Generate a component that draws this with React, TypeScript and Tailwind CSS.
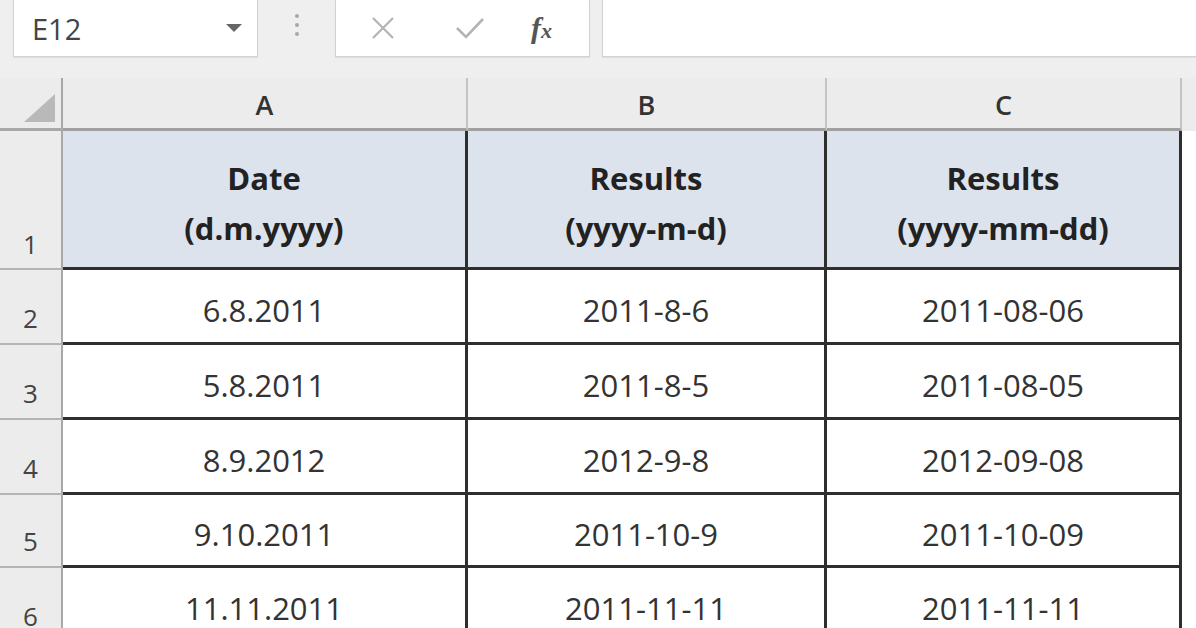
import React from 'react';

const cols = ['A', 'B', 'C'];

const heads = [
  ['Date', '(d.m.yyyy)'],
  ['Results', '(yyyy-m-d)'],
  ['Results', '(yyyy-mm-dd)'],
];

const rows = [
  ['6.8.2011', '2011-8-6', '2011-08-06'],
  ['5.8.2011', '2011-8-5', '2011-08-05'],
  ['8.9.2012', '2012-9-8', '2012-09-08'],
  ['9.10.2011', '2011-10-9', '2011-10-09'],
  ['11.11.2011', '2011-11-11', '2011-11-11'],
];

const widths = ['w-[405px]', 'w-[359px]', 'w-[355px]'];
const rowHeights = ['h-[75px]', 'h-[75px]', 'h-[75px]', 'h-[73px]', 'h-[75px]'];

function FormulaBar() {
  return (
    <div className="flex h-[78px] bg-[#efefef]">
      {/* name box */}
      <div className="ml-[13px] flex h-[57px] w-[245px] items-center justify-between border-x border-b border-[#d2d2d2] bg-white pl-[18px] pr-[15px] shadow-[0_1px_1px_rgba(0,0,0,0.06)]">
        <span className="text-[29px] font-medium leading-none text-[#444]">E12</span>
        <svg width="16" height="9" viewBox="0 0 16 9">
          <path d="M0 0h16L8 8z" fill="#666" />
        </svg>
      </div>
      {/* grip dots */}
      <div className="flex w-[77px] flex-col items-center gap-[5px] pt-[14px]">
        <span className="h-[4px] w-[4px] rounded-full bg-[#a8a8a8]" />
        <span className="h-[4px] w-[4px] rounded-full bg-[#a8a8a8]" />
        <span className="h-[4px] w-[4px] rounded-full bg-[#a8a8a8]" />
      </div>
      {/* cancel / enter / fx */}
      <div className="flex h-[57px] w-[255px] items-center border-x border-b border-[#d2d2d2] bg-white pl-[34px] shadow-[0_1px_1px_rgba(0,0,0,0.06)]">
        <svg width="26" height="26" viewBox="0 0 26 26">
          <path d="M3 3L23 23M23 3L3 23" stroke="#b4b4b4" strokeWidth="2.2" />
        </svg>
        <svg className="ml-[59px]" width="30" height="24" viewBox="0 0 30 24">
          <path d="M2 12L11 21L28 3" fill="none" stroke="#b4b4b4" strokeWidth="2.6" />
        </svg>
        <span className="ml-[46px] font-['Liberation_Serif',serif] text-[30px] font-bold italic leading-none text-[#555]">
          f<span className="text-[22px]">x</span>
        </span>
      </div>
      {/* formula input */}
      <div className="ml-[12px] h-[57px] flex-1 border-b border-l border-[#d2d2d2] bg-white shadow-[0_1px_1px_rgba(0,0,0,0.06)]" />
    </div>
  );
}

export default function App() {
  return (
    <div className="h-[628px] w-[1196px] overflow-hidden bg-white font-['Open_Sans',sans-serif] text-[#333]">
      <FormulaBar />

      {/* column headers */}
      <div className="flex h-[53px]">
        <div className="flex w-[63px] items-end border-r-2 border-b-[3px] border-[#a8a8a8] bg-[#ececec] pb-[6px] pl-[24px]">
          <svg width="31" height="28" viewBox="0 0 31 28">
            <path d="M31 0V28H0z" fill="#b9b9b9" />
          </svg>
        </div>
        {cols.map((c, i) => (
          <div
            key={c}
            className={`${widths[i]} flex items-center justify-center border-r-2 border-b-[3px] border-r-[#c4c4c4] border-b-[#a0a0a0] bg-[#ececec] pt-[2px] text-[27px] font-semibold leading-none text-[#333]`}
          >
            {c}
          </div>
        ))}
        <div className="flex-1 bg-[#ececec]" />
      </div>

      {/* row 1: header cells */}
      <div className="flex h-[139px]">
        <div className="flex w-[63px] items-end justify-center border-r-2 border-b-2 border-r-[#a8a8a8] border-b-[#b4b4b4] bg-[#ececec] pb-[4px] text-[26px] font-medium text-[#444]">
          1
        </div>
        {heads.map((h, i) => (
          <div
            key={i}
            className={`${widths[i]} flex flex-col items-center justify-center border-r-[3px] border-b-[3px] border-[#2e2e2e] bg-[#dce3ec] pt-[8px] text-[31px] font-bold leading-[50px] text-[#222]`}
          >
            <span>{h[0]}</span>
            <span>{h[1]}</span>
          </div>
        ))}
        <div className="flex-1" />
      </div>

      {/* data rows */}
      {rows.map((r, ri) => (
        <div key={ri} className={`flex shrink-0 ${rowHeights[ri]}`}>
          <div className="flex w-[63px] items-end justify-center border-r-2 border-b-2 border-r-[#a8a8a8] border-b-[#b4b4b4] bg-[#ececec] pb-[5px] text-[26px] font-medium text-[#444]">
            {ri + 2}
          </div>
          {r.map((v, ci) => (
            <div
              key={ci}
              className={`${widths[ci]} flex items-center justify-center border-r-[3px] border-b-[3px] border-[#2e2e2e] pt-[8px] text-[31px] font-medium leading-[40px] text-[#333]`}
            >
              {v}
            </div>
          ))}
          <div className="flex-1" />
        </div>
      ))}
    </div>
  );
}
